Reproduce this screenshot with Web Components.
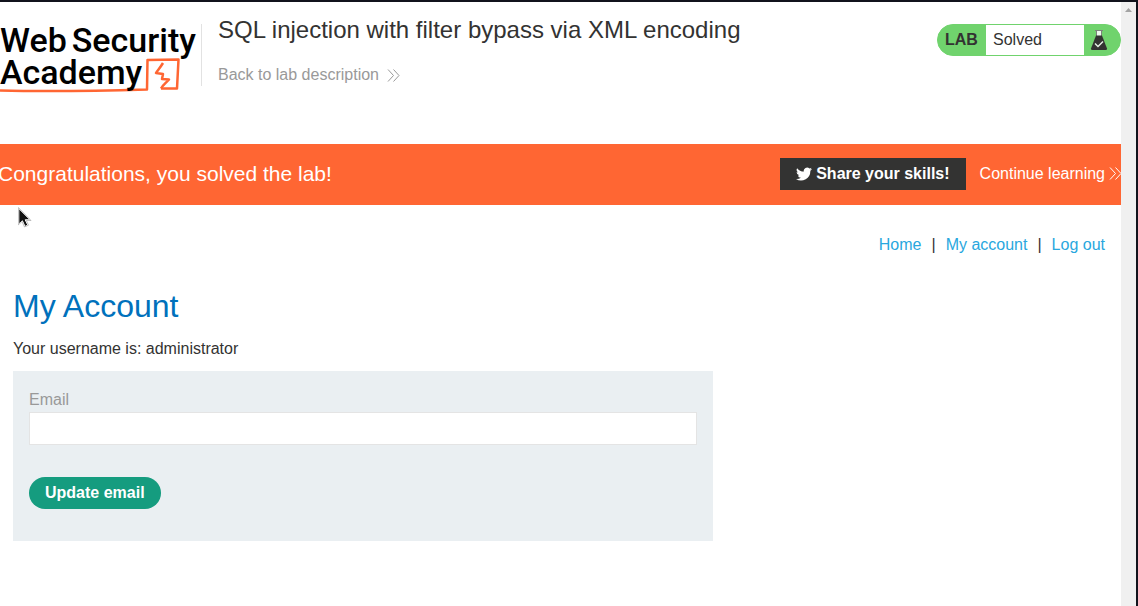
<!DOCTYPE html>
<html lang="en">
<head>
<meta charset="utf-8">
<meta name="viewport" content="width=device-width, initial-scale=1">
<title>SQL injection with filter bypass via XML encoding</title>
<style>
  body { margin: 0; font: 16px/20px "Liberation Sans", Arial, sans-serif; color: #333332; background: #fff; }
</style>
</head>
<body>
<window-frame>
  <lab-header>
    <academy-logo slot="logo"></academy-logo>
    <span slot="title">SQL injection with filter bypass via XML encoding</span>
    <lab-status slot="status">Solved</lab-status>
  </lab-header>
  <solved-banner>Congratulations, you solved the lab!</solved-banner>
  <account-nav></account-nav>
  <account-page username="administrator"></account-page>
  <mouse-pointer></mouse-pointer>
</window-frame>

<script>
const define = (name, html) => {
  const template = document.createElement('template');
  template.innerHTML = html;
  customElements.define(name, class extends HTMLElement {
    constructor() {
      super();
      this.attachShadow({ mode: 'open' }).append(template.content.cloneNode(true));
    }
    connectedCallback() {
      const user = this.shadowRoot.querySelector('.username');
      if (user) user.textContent = this.getAttribute('username');
    }
  });
};

define('window-frame', `
<style>
  :host { display: flex; box-sizing: border-box; min-height: 100vh; position: relative;
    border-top: 2px solid #11131c; border-right: 2px solid #11131c; }
  main { flex: 1; min-width: 0; overflow: hidden; }
  .track { width: 15px; background: #f0f0f0; display: flex; justify-content: center; padding-top: 6px; box-sizing: border-box; }
  svg { display: block; }
</style>
<main><slot></slot></main>
<div class="track"><svg width="7" height="4" viewBox="0 0 7 4"><path d="M0 4 3.5 0 7 4z" fill="#a3a3a3"/></svg></div>`);

define('academy-logo', `
<style>
  :host { display: block; position: relative; width: 201px; height: 70px; font: 500 34px/32px Roboto, sans-serif; color: #000; }
  .line { display: flex; gap: 5px; position: relative; white-space: nowrap; }
  svg { position: absolute; left: 0; top: 30px; }
</style>
<svg width="182" height="42" viewBox="0 54 182 42" fill="none" stroke="#ff6633" stroke-linejoin="round">
  <path d="M0 90.500Q60 92 147 89.500L147.500 60Q162 59.500 178.500 59.500L177 88.500 161 88.500" stroke-width="2.500"/>
  <path d="M163 63C160 68 157 71 156 73L163 74 162 79 169 79.500C166 83 163 85 161 88.500" stroke-width="2.500"/>
</svg>
<div class="line"><span>Web</span><span>Security</span></div>
<div class="line"><span>Academy</span></div>`);

define('double-chevron', `
<style>:host { display: inline-block; width: 13px; height: 13px; } svg { display: block; }</style>
<svg width="13" height="13" viewBox="0 0 13 13" fill="none" stroke="currentColor"><path d="M1 .5 6.500 6.500 1 12.500M6.500 .5 12 6.500 6.500 12.500"/></svg>`);

define('lab-header', `
<style>
  :host { display: flex; align-items: flex-start; height: 142px; }
  .logo { margin-top: 22px; }
  .text { flex: 1; margin-top: 22px; height: 62px; border-left: 1px solid #e2e2e2; padding-left: 16px; }
  h2 { margin: -8px 0 21px; font-size: 24px; line-height: 28px; font-weight: 400; }
  a { display: flex; align-items: center; gap: 8px; color: #999; text-decoration: none; }
  .status { margin-top: 22px; }
</style>
<div class="logo"><slot name="logo"></slot></div>
<div class="text"><h2><slot name="title"></slot></h2><a href="#lab">Back to lab description <double-chevron></double-chevron></a></div>
<div class="status"><slot name="status"></slot></div>`);

define('lab-status', `
<style>
  :host { display: flex; align-items: stretch; box-sizing: border-box; width: 184px; height: 32px; border: 1px solid #70d36d; border-radius: 16px; overflow: hidden; background: #70d36d; line-height: 30px; }
  b { width: 48px; box-sizing: border-box; padding-left: 7px; }
  .state { flex: 1; padding-left: 7px; background: #fff; }
  svg { display: block; width: 36px; }
</style>
<b>LAB</b><span class="state"><slot></slot></span>
<svg width="36" height="30" viewBox="0 0 36 30">
  <path d="M12 5.500h6v5.500h-6z" fill="#eef8ed"/>
  <path d="M11 5h8v1h-8zM12 6h1v5h-1zM17 6h1v5h-1z" fill="#7c827b"/>
  <path d="M12 10.500h6L23 23.500Q23 25 22 25H8Q7 25 7 23.500z" fill="#333332"/>
  <path d="m11 18.500 3 3 5-5" fill="none" stroke="#e6f0e6" stroke-width="1.500"/>
</svg>`);

define('solved-banner', `
<style>
  :host { display: flex; align-items: center; box-sizing: border-box; height: 61px; padding-bottom: 2px; background: #ff6633; color: #fff; white-space: nowrap; }
  h4 { flex: 1; margin: 0 0 0 -2px; font-size: 21px; line-height: 24px; font-weight: 400; }
  button { display: flex; align-items: center; gap: 4px; height: 32px; margin: 0 14px 0 0; padding: 0 16px; border: 0; background: #333332; color: #fff; font: bold 16px/20px "Liberation Sans", Arial, sans-serif; }
  a { display: flex; align-items: center; gap: 4px; color: #fff; text-decoration: none; margin-right: -1px; }
</style>
<h4><slot></slot></h4>
<button type="button"><svg width="16" height="16" viewBox="0 0 24 24" fill="#fff"><path d="M24 4.600a10 10 0 0 1-2.800.8 5 5 0 0 0 2.100-2.700 10 10 0 0 1-3.100 1.200 4.900 4.900 0 0 0-8.400 4.500A14 14 0 0 1 1.700 3.200a4.900 4.900 0 0 0 1.500 6.500 4.900 4.900 0 0 1-2.200-.6 4.900 4.900 0 0 0 3.900 4.900 5 5 0 0 1-2.200.1 4.900 4.900 0 0 0 4.600 3.400A9.900 9.900 0 0 1 0 19.500a14 14 0 0 0 21.500-12.400A10 10 0 0 0 24 4.600z"/></svg>Share your skills!</button>
<a href="#next">Continue learning<double-chevron></double-chevron></a>`);

define('account-nav', `
<style>
  :host { display: flex; justify-content: flex-end; gap: 10px; padding: 30px 16px 0; }
  a { color: #29a7de; text-decoration: none; }
</style>
<a href="#home">Home</a><span>|</span><a href="#account">My account</a><span>|</span><a href="#logout">Log out</a>`);

define('account-page', `
<style>
  :host { display: block; padding: 31px 13px 0; }
  h1 { margin: 0 0 13px; font-size: 32px; line-height: 40px; font-weight: 400; color: #0071bc; }
  p { margin: 0 0 12px; }
  form { box-sizing: border-box; max-width: 700px; padding: 16px 16px 32px; background: #eaeff2; }
  label { display: block; line-height: 25px; color: #999; }
  input { display: block; box-sizing: border-box; width: 100%; height: 33px; margin: 0 0 32px; padding: 0 8px; border: 1px solid #e4e4e4; border-radius: 0; background: #fff; font: inherit; color: inherit; }
  button { display: block; height: 32px; padding: 0 16px; border: 0; border-radius: 16px; background: #159c7f; color: #fff; font: bold 16px/20px "Liberation Sans", Arial, sans-serif; }
</style>
<h1>My Account</h1>
<p>Your username is: <span class="username"></span></p>
<form>
  <label for="email">Email</label>
  <input id="email" name="email" type="email">
  <button type="button">Update email</button>
</form>`);

define('mouse-pointer', `
<style>:host { position: absolute; left: 18px; top: 205px; pointer-events: none; } svg { display: block; }</style>
<svg width="14" height="21" viewBox="0 0 14 21"><path d="M.8 1.500V17l3.600-3.200 2.600 5.600 2.800-1.300-2.600-5.300h4.800z" fill="#111" stroke="#fff" stroke-width="1"/><path d="M.3.500V17.800L4 14.500 6.500 20 10.500 18.200 8.300 13.500H13z" stroke="#999" stroke-width=".6" fill="none"/></svg>`);
</script>
</body>
</html>
